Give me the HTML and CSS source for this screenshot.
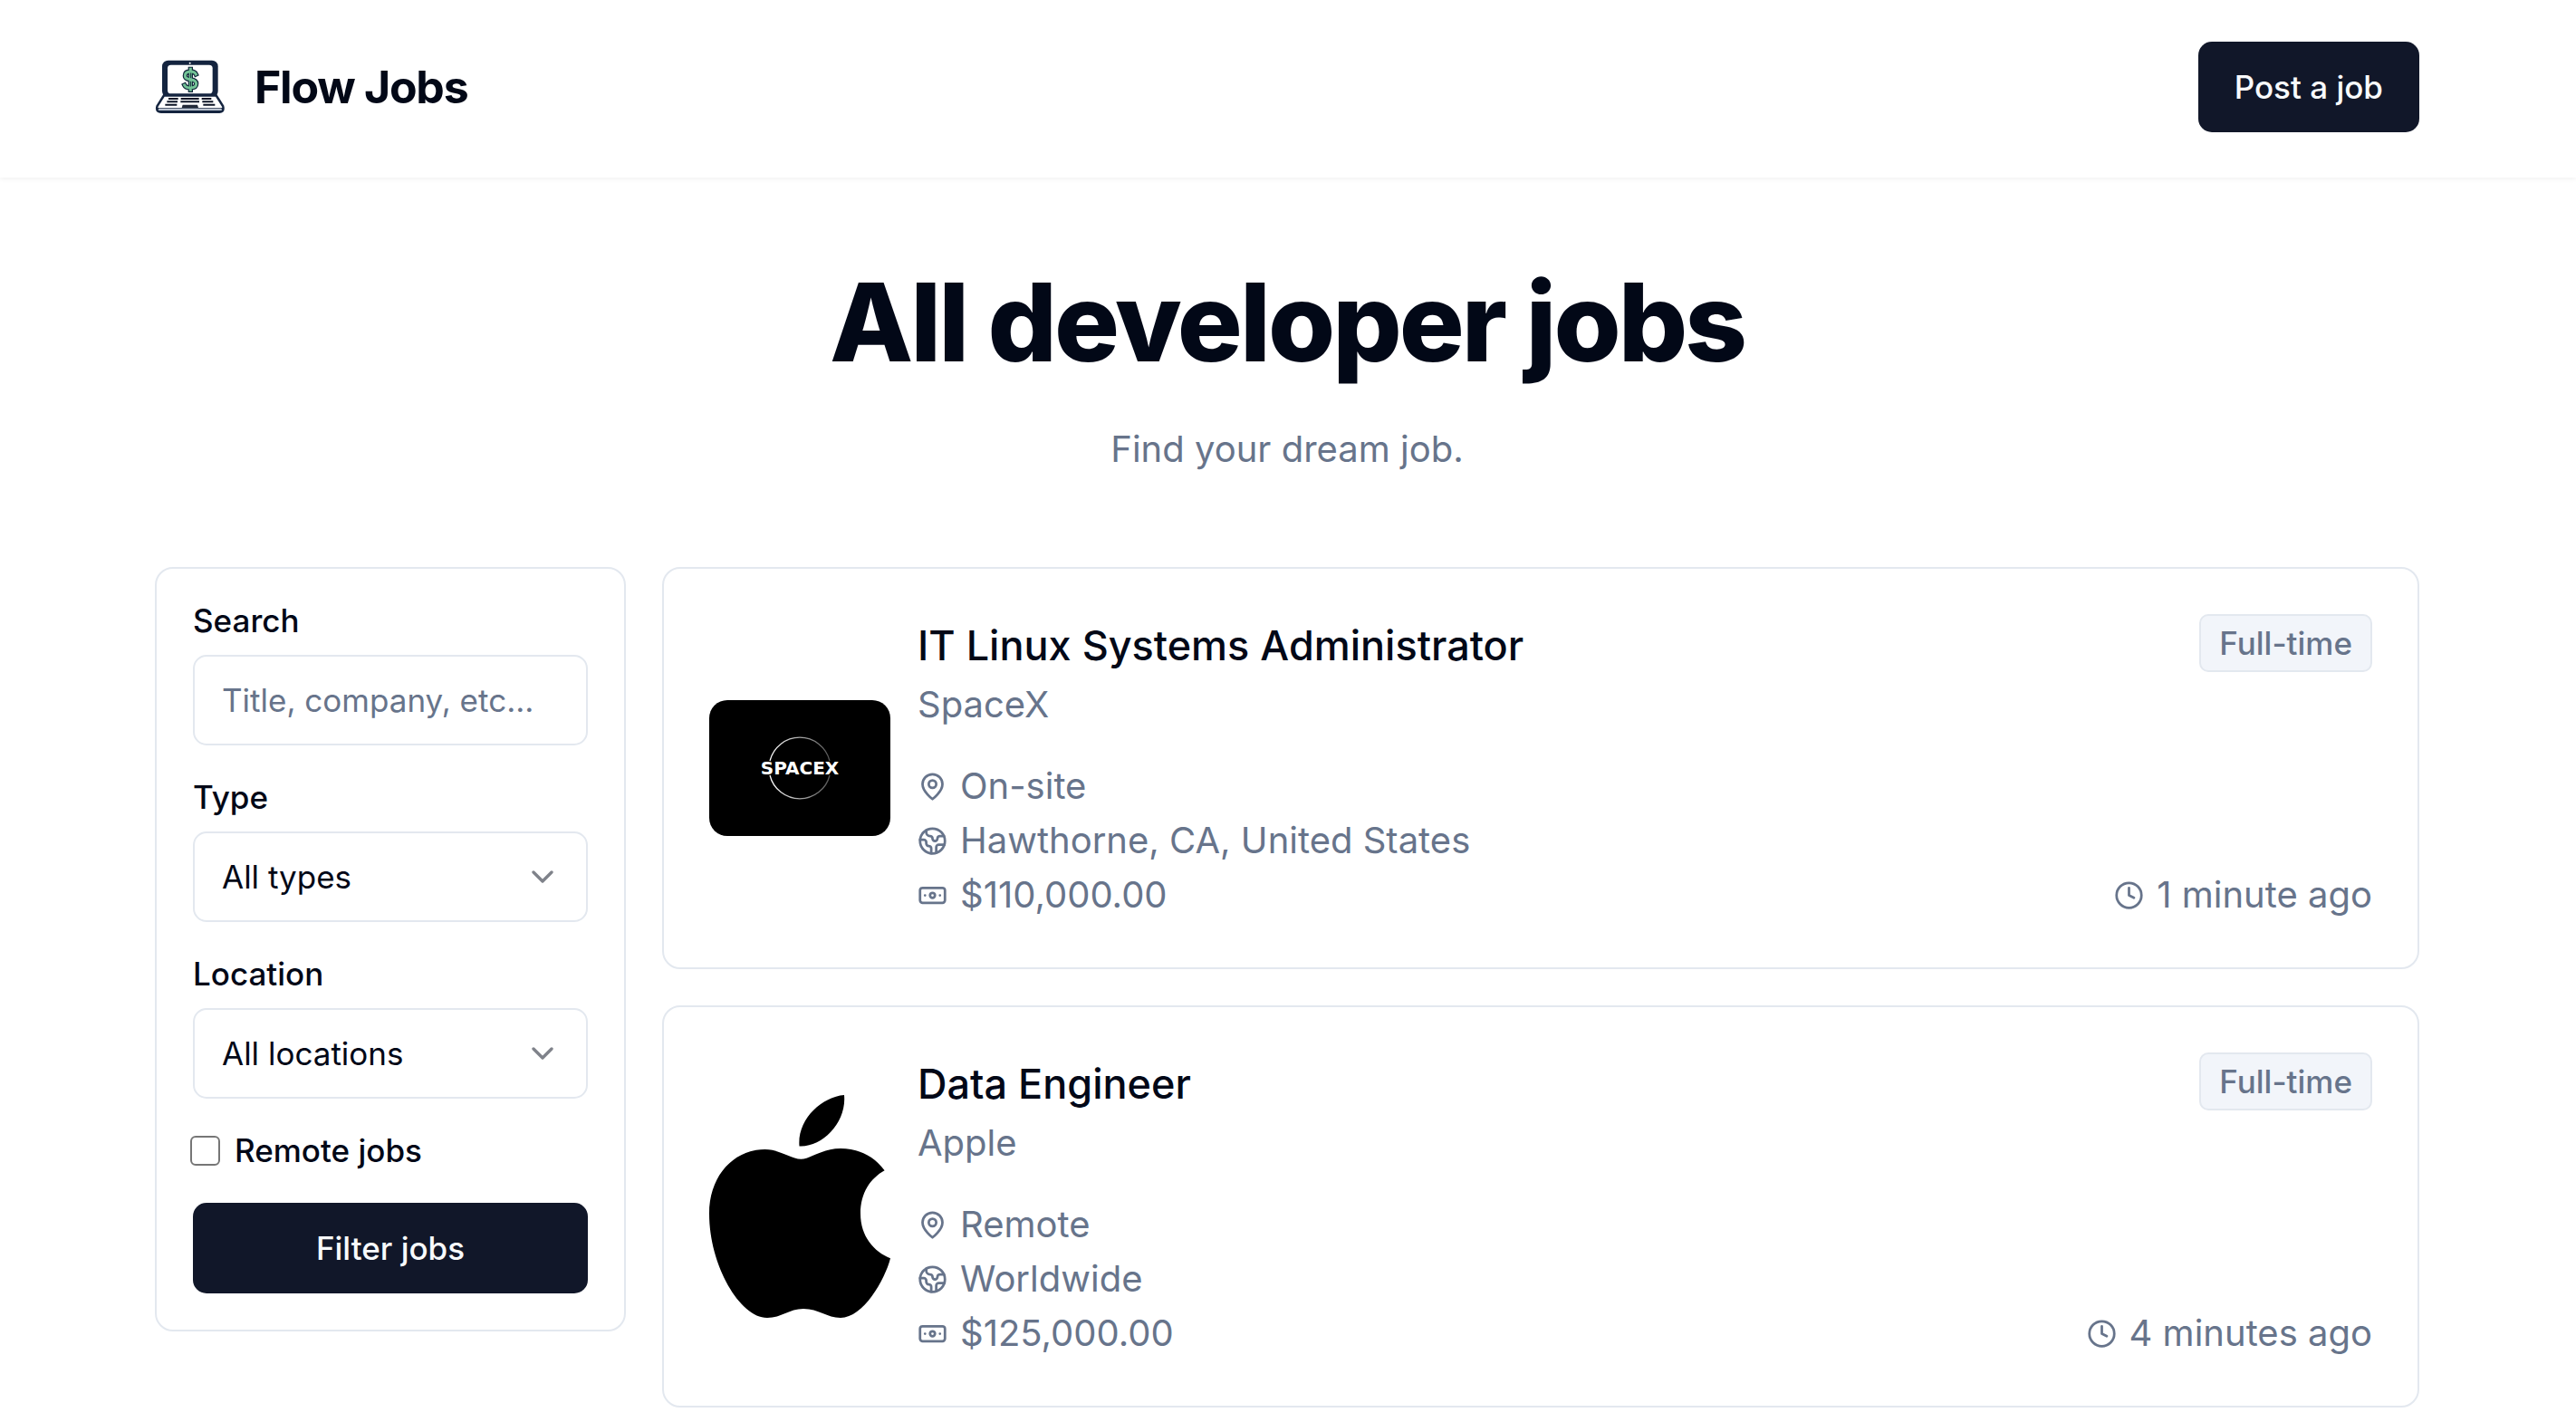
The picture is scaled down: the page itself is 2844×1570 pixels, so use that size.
FILE: index.html
```html
<!DOCTYPE html>
<html lang="en">
<head>
<meta charset="utf-8">
<meta name="viewport" content="width=device-width, initial-scale=1">
<title>Flow Jobs</title>
<link rel="stylesheet" href="styles.css">
</head>
<body>
<svg class="sprite" aria-hidden="true">
  <symbol id="map-pin" viewBox="0 0 24 24"><path d="M20 10c0 6-8 12-8 12s-8-6-8-12a8 8 0 0 1 16 0Z"/><circle cx="12" cy="10" r="3"/></symbol>
  <symbol id="globe" viewBox="0 0 24 24"><path d="M21.54 15H17a2 2 0 0 0-2 2v4.54M7 3.34V5a3 3 0 0 0 3 3a2 2 0 0 1 2 2c0 1.1.9 2 2 2a2 2 0 0 0 2-2c0-1.1.9-2 2-2h3.17M11 21.95V18a2 2 0 0 0-2-2a2 2 0 0 1-2-2v-1a2 2 0 0 0-2-2H2.05"/><circle cx="12" cy="12" r="10"/></symbol>
  <symbol id="banknote" viewBox="0 0 24 24"><rect x="2" y="6" width="20" height="12" rx="2"/><circle cx="12" cy="12" r="2"/><path d="M6 12h.01M18 12h.01"/></symbol>
  <symbol id="clock" viewBox="0 0 24 24"><circle cx="12" cy="12" r="10"/><path d="M12 6v6l4 2"/></symbol>
  <symbol id="chevron" viewBox="0 0 24 24"><path d="m6 9 6 6 6-6"/></symbol>
</svg>

<header class="site-header">
  <nav class="container nav">
    <a class="brand" href="#">
      <svg class="brand-logo" viewBox="66 76 234 180" aria-hidden="true">
        <rect x="90" y="78" width="185" height="122" rx="20" fill="#14243f"/>
        <rect x="108" y="93" width="149" height="95" rx="11" fill="#fff"/>
        <circle cx="182" cy="87" r="3" fill="#fff"/>
        <path d="M94 190H271L295 228Q301 252 280 253H86Q64 252 70 228Z" fill="#14243f"/>
        <path d="M98 198H267L289 233Q289 236 285 236H80Q76 236 76 233Z" fill="#fff"/>
        <path d="M80 241H285" stroke="#b9c2cf" stroke-width="6" stroke-linecap="round"/>
        <path d="M111 205H143M152 205H212M221 205H253M106 215H141M151 215H213M223 215H259M100 225H139M226 225H265" stroke="#0d1526" stroke-width="6"/>
        <path d="M158 225H207L210 235H155Z" fill="#222a39"/>
        <g fill="none" stroke-linecap="square">
          <path d="M184 107V176M202 124Q198 115 184 115Q166 115 166 129Q166 139 184 141Q203 144 203 155Q203 169 184 169Q168 169 164 160" stroke="#10263a" stroke-width="16"/>
          <path d="M184 107V176M202 124Q198 115 184 115Q166 115 166 129Q166 139 184 141Q203 144 203 155Q203 169 184 169Q168 169 164 160" stroke="#72c296" stroke-width="9"/>
          <path d="M185 121V135M184 149V163" stroke="#10263a" stroke-width="3"/>
        </g>
      </svg>
      <span class="brand-name">Flow Jobs</span>
    </a>
    <button class="btn" type="button">Post a job</button>
  </nav>
</header>

<main class="container main">
  <div class="hero">
    <h1>All developer jobs</h1>
    <p>Find your dream job.</p>
  </div>

  <section class="board">
    <form class="filters">
      <div class="field">
        <label for="q">Search</label>
        <input class="control" id="q" type="text" placeholder="Title, company, etc...">
      </div>
      <div class="field">
        <label for="type">Type</label>
        <div class="select">
          <select class="control" id="type"><option>All types</option></select>
          <svg class="chevron" aria-hidden="true"><use href="#chevron"/></svg>
        </div>
      </div>
      <div class="field">
        <label for="location">Location</label>
        <div class="select">
          <select class="control" id="location"><option>All locations</option></select>
          <svg class="chevron" aria-hidden="true"><use href="#chevron"/></svg>
        </div>
      </div>
      <div class="check">
        <input id="remote" type="checkbox">
        <label for="remote">Remote jobs</label>
      </div>
      <button class="btn" type="button">Filter jobs</button>
    </form>

    <div class="jobs">
      <article class="job">
        <svg class="job-logo spacex" viewBox="0 0 200 150" role="img" aria-label="SpaceX logo">
          <defs>
            <linearGradient id="ring" x1="0" x2="1"><stop offset="0" stop-color="#fff"/><stop offset="1" stop-color="#555"/></linearGradient>
          </defs>
          <path d="M67 67A34 34 0 0 1 133 67M67 83A34 34 0 0 0 133 83" fill="none" stroke="url(#ring)" stroke-width="1.3"/>
          <text class="wordmark" x="100" y="82" text-anchor="middle">SPACEX</text>
        </svg>
        <div class="job-info">
          <h2>IT Linux Systems Administrator</h2>
          <p class="company">SpaceX</p>
          <ul class="facts">
            <li><svg class="icon" aria-hidden="true"><use href="#map-pin"/></svg>On-site</li>
            <li><svg class="icon" aria-hidden="true"><use href="#globe"/></svg>Hawthorne, CA, United States</li>
            <li><svg class="icon" aria-hidden="true"><use href="#banknote"/></svg>$110,000.00</li>
          </ul>
        </div>
        <div class="job-meta">
          <span class="badge">Full-time</span>
          <span class="posted"><svg class="icon" aria-hidden="true"><use href="#clock"/></svg>1 minute ago</span>
        </div>
      </article>

      <article class="job">
        <svg class="job-logo" viewBox="0 0 200 246" role="img" aria-label="Apple logo">
          <path d="M149 0C124 2 97 27 99.5 56.5C125 58 152 30 149 0ZM101.4 70.7C90 70.7 78 60 61.4 60C28 60 0 88 0 131C0 188 34 246 64 246C80 246 88 236 104 236C121 236 130 246 145 246C170 246 194 204 200 180.3C182 173 167 156 167 131C167 108 178 92 193.6 83.3C182 67 164 59 145 59C124 59 112 70.7 101.4 70.7Z"/>
        </svg>
        <div class="job-info">
          <h2>Data Engineer</h2>
          <p class="company">Apple</p>
          <ul class="facts">
            <li><svg class="icon" aria-hidden="true"><use href="#map-pin"/></svg>Remote</li>
            <li><svg class="icon" aria-hidden="true"><use href="#globe"/></svg>Worldwide</li>
            <li><svg class="icon" aria-hidden="true"><use href="#banknote"/></svg>$125,000.00</li>
          </ul>
        </div>
        <div class="job-meta">
          <span class="badge">Full-time</span>
          <span class="posted"><svg class="icon" aria-hidden="true"><use href="#clock"/></svg>4 minutes ago</span>
        </div>
      </article>
    </div>
  </section>
</main>
</body>
</html>
```
FILE: styles.css
```css
:root {
  --ink: #020817;
  --muted: #67748b;
  --dark: #111729;
  --line: #e3e8ef;
}

* { box-sizing: border-box; }

body {
  margin: 0;
  background: #fff;
  color: var(--ink);
  font-family: Inter, "Liberation Sans", sans-serif;
  font-size: 40px;
  line-height: 60px;
}

h1, h2, p, ul { margin: 0; padding: 0; }

button, input, select { font: inherit; }

.sprite { display: none; }

.container {
  width: 100%;
  max-width: 2582px;
  margin: 0 auto;
  padding: 0 42px 0 40px;
}

.site-header {
  padding: 46px 0 50px;
  box-shadow: 0 2px 5px rgba(0, 0, 0, 0.05);
}

.nav {
  display: flex;
  align-items: center;
  justify-content: space-between;
}

.brand {
  display: flex;
  align-items: center;
  gap: 32px;
  color: inherit;
  text-decoration: none;
}

.brand-logo { width: 78px; height: 60px; }

.brand-name {
  font-size: 50px;
  font-weight: 700;
  letter-spacing: -0.025em;
}

.btn {
  height: 100px;
  padding: 0 40px;
  border: 0;
  border-radius: 15px;
  background: var(--dark);
  color: #f8fafc;
  font-size: 35px;
  font-weight: 500;
  line-height: 50px;
}

.main {
  display: flex;
  flex-direction: column;
  gap: 100px;
  padding-top: 100px;
}

.hero {
  display: flex;
  flex-direction: column;
  gap: 50px;
  text-align: center;
}

.hero h1 {
  font-size: 120px;
  font-weight: 800;
  letter-spacing: -0.025em;
  line-height: 120px;
}

.hero p { color: var(--muted); }

.board {
  display: flex;
  align-items: flex-start;
  gap: 40px;
}

.filters {
  flex: 0 0 520px;
  display: flex;
  flex-direction: column;
  gap: 40px;
  padding: 40px;
  border: 2px solid var(--line);
  border-radius: 20px;
}

.field {
  display: flex;
  flex-direction: column;
  gap: 20px;
}

.filters label {
  font-size: 35px;
  font-weight: 500;
  line-height: 35px;
}

.control {
  display: block;
  width: 100%;
  height: 100px;
  padding: 0 30px;
  border: 2px solid var(--line);
  border-radius: 15px;
  background: transparent;
  color: var(--ink);
  font-size: 35px;
  line-height: 50px;
  appearance: none;
}

.control::placeholder { color: var(--muted); opacity: 1; }

.select { position: relative; }

.chevron {
  position: absolute;
  top: 30px;
  right: 30px;
  width: 40px;
  height: 40px;
  opacity: 0.5;
  pointer-events: none;
}

.chevron, .icon {
  fill: none;
  stroke: currentColor;
  stroke-width: 2;
  stroke-linecap: round;
  stroke-linejoin: round;
}

.check {
  display: flex;
  align-items: center;
  gap: 16px;
  margin-left: -3px;
}

.check input {
  width: 33px;
  height: 33px;
  margin: 0;
  border: 2px solid #767676;
  border-radius: 6px;
  appearance: none;
}

.check input:checked { background: var(--dark); }

.jobs {
  flex: 1;
  display: flex;
  flex-direction: column;
  gap: 40px;
}

.job {
  display: flex;
  align-items: center;
  gap: 30px;
  padding: 50px;
  border: 2px solid var(--line);
  border-radius: 20px;
}

.job-logo { flex: none; width: 200px; }

.spacex {
  border-radius: 20px;
  background: #000;
}

.wordmark {
  fill: #fff;
  font-family: "DejaVu Sans", sans-serif;
  font-size: 20px;
  font-weight: 700;
}

.job-info { flex: 1; }

.job h2 {
  font-size: 45px;
  font-weight: 500;
  line-height: 70px;
}

.company { color: var(--muted); }

.facts {
  margin-top: 30px;
  color: var(--muted);
  list-style: none;
}

.facts li, .posted {
  display: flex;
  align-items: center;
  gap: 14px;
}

.icon { width: 33px; height: 33px; }

.job-meta {
  align-self: stretch;
  display: flex;
  flex-direction: column;
  align-items: flex-end;
  justify-content: space-between;
  color: var(--muted);
}

.badge {
  padding: 5px 20px;
  border: 2px solid var(--line);
  border-radius: 10px;
  background: #f2f5fa;
  font-size: 35px;
  font-weight: 500;
  line-height: 50px;
}
```
